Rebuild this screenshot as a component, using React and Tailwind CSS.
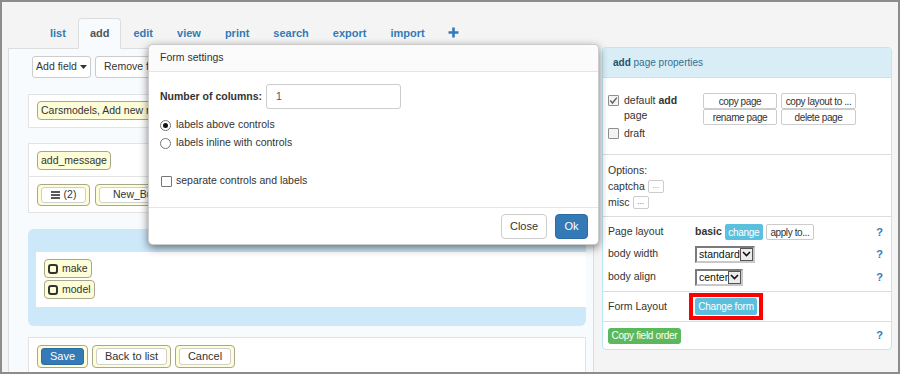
import React from 'react'

const font = "font-['Liberation_Sans',Arial,sans-serif]"

function Chip({ children, className = '' }) {
  return (
    <div className={`inline-flex items-center whitespace-nowrap border border-[#aaa68c] bg-[#fdfdd7] rounded-[4px] ${className}`}>
      {children}
    </div>
  )
}

function InnerBtn({ children, className = '' }) {
  return (
    <div className={`flex items-center justify-center border border-[#cfcfcf] bg-white rounded-[3px] text-[#333] ${className}`}>
      {children}
    </div>
  )
}

function BoxIcon() {
  return (
    <svg width="10" height="10" viewBox="0 0 10 10" className="shrink-0">
      <rect x="1" y="1" width="8" height="8" rx="2" fill="none" stroke="#333" strokeWidth="2" />
    </svg>
  )
}

function Check({ checked }) {
  return (
    <span className="w-[11px] h-[11px] border border-[#8f8f8f] bg-[#f3f3f3] rounded-[1px] flex items-center justify-center shrink-0">
      {checked && (
        <svg width="9" height="9" viewBox="0 0 9 9">
          <path d="M1.2 4.6 L3.5 7 L7.8 1.6" fill="none" stroke="#666" strokeWidth="1.5" />
        </svg>
      )}
    </span>
  )
}

function Radio({ checked }) {
  return (
    <span className="w-[11px] h-[11px] rounded-full border border-[#767676] bg-white flex items-center justify-center shrink-0">
      {checked && <span className="w-[5px] h-[5px] rounded-full bg-[#111]" />}
    </span>
  )
}

function Select({ value, className = '' }) {
  return (
    <div className={`h-[17px] flex items-center justify-between border-2 border-t-[#7a7a7a] border-l-[#7a7a7a] border-r-[#c8c8c8] border-b-[#c8c8c8] bg-white ${className}`}>
      <span className="pl-[2px] text-[10.5px] text-[#111] leading-none">{value}</span>
      <span className="w-[14px] h-[13px] border border-[#555] bg-[#ececec] flex items-center justify-center">
        <svg width="9" height="6" viewBox="0 0 9 6">
          <path d="M1 1 L4.5 4.5 L8 1" fill="none" stroke="#111" strokeWidth="1.6" />
        </svg>
      </span>
    </div>
  )
}

function SmallBtn({ children, className = '' }) {
  return (
    <div className={`h-[16px] flex items-center justify-center whitespace-nowrap border border-[#ccc] bg-white rounded-[2px] text-[10px] tracking-[-0.4px] text-[#333] ${className}`}>
      {children}
    </div>
  )
}

function Help() {
  return <span className="ml-auto text-[11px] font-bold text-[#337ab7]">?</span>
}

export default function App() {
  const tabs = ['list', 'add', 'edit', 'view', 'print', 'search', 'export', 'import']

  return (
    <div className={`${font} relative w-[900px] h-[374px] overflow-hidden border-2 border-[#8c8c8c] bg-[#f4f4f4] text-[10.5px] text-[#333]`}>
      <div className="flex items-start">
        {/* left column */}
        <div className="ml-[6px] w-[586px] flex flex-col">
          <div className="mt-[15px] pl-[30px] flex items-end relative z-10">
            {tabs.map(t => (
              <div
                key={t}
                className={`h-[31px] -mb-px px-[11px] flex items-center border rounded-t-[4px] text-[11px] font-bold ${
                  t === 'add'
                    ? 'border-[#ddd] border-b-[#f8fbfe] bg-[#f8fbfe] text-[#555]'
                    : 'border-transparent text-[#337ab7]'
                }`}
              >
                {t}
              </div>
            ))}
            <div className="h-[31px] px-[11px] flex items-center">
              <svg width="11" height="11" viewBox="0 0 11 11">
                <path d="M5.5 0.5 V10.5 M0.5 5.5 H10.5" stroke="#337ab7" strokeWidth="2.6" />
              </svg>
            </div>
          </div>

          <div className="h-[340px] border border-[#ddd] bg-[#f8fbfe] pl-[19px] pr-[7px] pt-[7px]">
            {/* toolbar */}
            <div className="pl-[4px] flex gap-[4px]">
              <div className="h-[22px] w-[59px] flex items-center justify-center gap-[3px] border border-[#ccc] bg-white rounded-[3px]">
                Add field
                <svg width="7" height="4" viewBox="0 0 7 4"><path d="M0 0 H7 L3.5 4 Z" fill="#333" /></svg>
              </div>
              <div className="h-[22px] w-[86px] flex items-center whitespace-nowrap pl-[8px] gap-[3px] border border-[#ccc] bg-white rounded-[3px]">
                Remove field
                <svg width="7" height="4" viewBox="0 0 7 4"><path d="M0 0 H7 L3.5 4 Z" fill="#333" /></svg>
              </div>
            </div>

            {/* box 1 */}
            <div className="mt-[16px] h-[34px] border border-[#e3e3e3] bg-white pl-[8px] pt-[6px]">
              <Chip className="h-[19px] px-[3px]">Carsmodels, Add new record</Chip>
            </div>

            {/* box 2 */}
            <div className="mt-[15px] border border-[#e3e3e3] bg-white">
              <div className="pl-[8px] pt-[7px] pb-[6px]">
                <Chip className="h-[19px] px-[3px]">add_message</Chip>
              </div>
              <div className="border-t border-[#e3e3e3] pl-[8px] pt-[7px] pb-[6px] flex gap-[5px]">
                <Chip className="h-[22px] px-[3px]">
                  <InnerBtn className="h-[16px] w-[45px] gap-[4px]">
                    <svg width="9" height="8" viewBox="0 0 9 8">
                      <path d="M0 1 H9 M0 4 H9 M0 7 H9" stroke="#222" strokeWidth="1.6" />
                    </svg>
                    (2)
                  </InnerBtn>
                </Chip>
                <Chip className="h-[22px] px-[3px]">
                  <InnerBtn className="h-[16px] px-[13px] justify-start">New_Button</InnerBtn>
                </Chip>
              </div>
            </div>

            {/* blue area */}
            <div className="mt-[16px] rounded-[6px] bg-[#cde8f9] pl-[8px] pt-[23px] pb-[19px]">
              <div className="h-[55px] bg-white pl-[8px] pt-[7px] flex flex-col items-start gap-[2px]">
                <Chip className="h-[19px] pl-[3px] pr-[3px] gap-[4px]">
                  <BoxIcon />make
                </Chip>
                <Chip className="h-[19px] pl-[3px] pr-[3px] gap-[4px]">
                  <BoxIcon />model
                </Chip>
              </div>
            </div>

            {/* bottom box */}
            <div className="mt-[11px] h-[60px] border border-[#e3e3e3] bg-white pl-[8px] pt-[7px] flex items-start gap-[4px]">
              <Chip className="h-[23px] px-[3px]">
                <div className="h-[17px] w-[43px] flex items-center justify-center bg-[#337ab7] border border-[#2e6da4] rounded-[3px] text-white text-[11px]">
                  Save
                </div>
              </Chip>
              <Chip className="h-[23px] px-[3px]">
                <InnerBtn className="h-[17px] w-[71px] text-[11px]">Back to list</InnerBtn>
              </Chip>
              <Chip className="h-[23px] px-[3px]">
                <InnerBtn className="h-[17px] w-[52px] text-[11px]">Cancel</InnerBtn>
              </Chip>
            </div>
          </div>
        </div>

        {/* right panel */}
        <div className="ml-[8px] mt-[45px] w-[290px] border border-[#bce8f1] rounded-[4px] bg-white">
          <div className="h-[30px] bg-[#d9edf7] border-b border-[#bce8f1] rounded-t-[3px] flex items-center pl-[10px] text-[10px] text-[#31708f]">
            <b className="text-[#245269]">add</b>&nbsp;page properties
          </div>

          <div className="border-b border-[#ddd] pl-[5px] pt-[15px] pb-[13px] flex">
            <div className="w-[95px] leading-[15px] text-[10.5px]">
              <div className="flex items-center gap-[5px]">
                <Check checked />
                <span>default <b>add</b></span>
              </div>
              <div className="pl-[16px]">page</div>
              <div className="mt-[3px] flex items-center gap-[5px]">
                <Check />
                <span>draft</span>
              </div>
            </div>
            <div className="grid grid-cols-[74px_75px] gap-x-[4px] gap-y-0 content-start">
              <SmallBtn>copy page</SmallBtn>
              <SmallBtn>copy layout to ...</SmallBtn>
              <SmallBtn>rename page</SmallBtn>
              <SmallBtn>delete page</SmallBtn>
            </div>
          </div>

          <div className="border-b border-[#ddd] pl-[5px] pt-[7px] pb-[6px] leading-[16px] text-[10.5px]">
            <div>Options:</div>
            <div className="flex items-center">
              captcha
              <span className="ml-[3px] w-[16px] h-[13px] border border-[#ccc] rounded-[2px] flex items-center justify-center text-[8px] text-[#888]">...</span>
            </div>
            <div className="flex items-center">
              misc
              <span className="ml-[3px] w-[16px] h-[13px] border border-[#ccc] rounded-[2px] flex items-center justify-center text-[8px] text-[#555]">...</span>
            </div>
          </div>

          <div className="border-b border-[#ddd] pl-[5px] pr-[8px] pt-[6px] pb-[5px] flex flex-col text-[10.5px]">
            <div className="h-[18px] flex items-center">
              <span className="w-[87px]">Page layout</span>
              <b>basic</b>
              <span className="ml-[3px] h-[16px] w-[38px] flex items-center justify-center bg-[#5bc0de] rounded-[2px] text-white text-[10px] tracking-[-0.3px]">change</span>
              <SmallBtn className="ml-[3px] w-[48px]">apply to...</SmallBtn>
              <Help />
            </div>
            <div className="mt-[4px] h-[18px] flex items-center">
              <span className="w-[87px]">body width</span>
              <Select value="standard" className="w-[60px]" />
              <Help />
            </div>
            <div className="mt-[5px] h-[18px] flex items-center">
              <span className="w-[87px]">body align</span>
              <Select value="center" className="w-[48px]" />
              <Help />
            </div>
          </div>

          <div className="border-b border-[#ddd] pl-[5px] h-[30px] flex items-center text-[10.5px]">
            <span className="w-[81px]">Form Layout</span>
            <span className="border-4 border-[#ff0000] px-[2px] py-[1px]">
              <span className="h-[17px] w-[62px] flex items-center justify-center bg-[#5bc0de] rounded-[2px] text-white text-[10px] tracking-[-0.2px]">Change form</span>
            </span>
          </div>

          <div className="h-[27px] pl-[5px] pr-[8px] flex items-center">
            <span className="h-[16px] w-[73px] flex items-center justify-center whitespace-nowrap bg-[#5cb85c] rounded-[3px] text-white text-[10px] tracking-[-0.3px]">Copy field order</span>
            <Help />
          </div>
        </div>
      </div>

      {/* modal */}
      <div className="absolute left-[146px] top-[42px] w-[451px] h-[201px] flex flex-col bg-white border border-black/20 rounded-[5px] shadow-[0_3px_9px_rgba(0,0,0,0.5)] z-20">
        <div className="h-[27px] shrink-0 border-b border-[#e5e5e5] bg-[#fbfbfb] rounded-t-[5px] pl-[11px] flex items-center">
          Form settings
        </div>
        <div className="flex-1 pl-[11px] pt-[12px]">
          <div className="flex items-center">
            <b className="w-[106px]">Number of columns:</b>
            <div className="h-[25px] w-[135px] border border-[#ccc] rounded-[3px] flex items-center pl-[9px] text-[#555]">1</div>
          </div>
          <div className="mt-[9px] h-[14px] flex items-center gap-[5px]">
            <Radio checked />labels above controls
          </div>
          <div className="mt-[4px] h-[14px] flex items-center gap-[5px]">
            <Radio />labels inline with controls
          </div>
          <div className="mt-[24px] h-[14px] flex items-center gap-[4px] pl-[1px]">
            <span className="w-[11px] h-[11px] border border-[#767676] bg-white rounded-[1px]" />
            separate controls and labels
          </div>
        </div>
        <div className="h-[37px] shrink-0 border-t border-[#e5e5e5] pr-[10px] flex items-center justify-end gap-[8px]">
          <div className="h-[25px] w-[46px] flex items-center justify-center border border-[#ccc] rounded-[4px] bg-white text-[11px]">Close</div>
          <div className="h-[25px] w-[33px] flex items-center justify-center border border-[#2e6da4] rounded-[4px] bg-[#337ab7] text-white text-[11px]">Ok</div>
        </div>
      </div>
    </div>
  )
}
